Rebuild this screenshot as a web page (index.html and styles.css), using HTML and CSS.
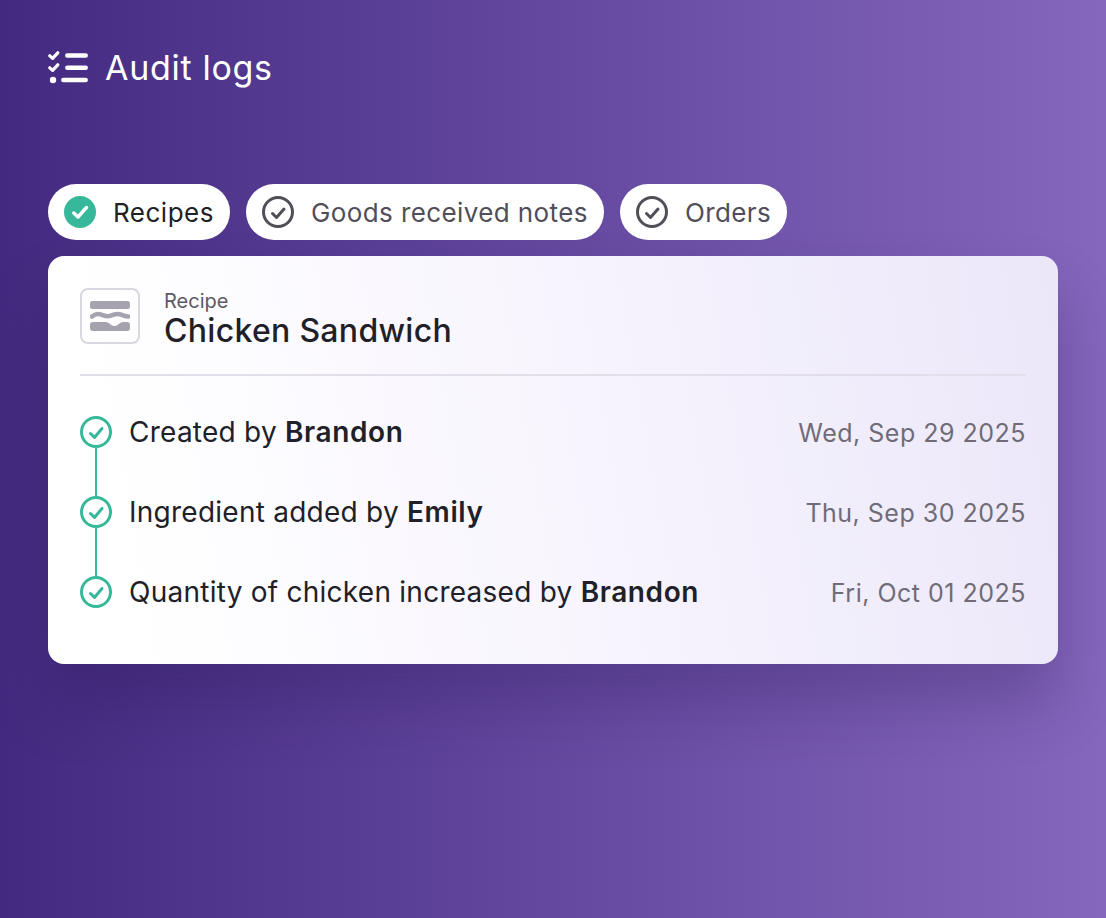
FILE: index.html
```html
<!DOCTYPE html>
<html lang="en">
<head>
    <meta charset="UTF-8">
    <meta name="viewport" content="width=device-width, initial-scale=1.0">
    <title>Audit logs</title>
    <link rel="stylesheet" href="styles.css">
</head>
<body>
    <header class="page-title">
        <svg class="title-icon" width="40" height="34" viewBox="0 0 40 34" fill="none">
            <path d="M1.8 4.8 L4.6 7.4 L9.8 1.8" stroke="#fff" stroke-width="3.2" stroke-linecap="round" stroke-linejoin="round"/>
            <path d="M1.8 16.8 L4.6 19.4 L9.8 13.8" stroke="#fff" stroke-width="3.2" stroke-linecap="round" stroke-linejoin="round"/>
            <circle cx="5" cy="29" r="3.2" fill="#fff"/>
            <path d="M19.3 4.5H37.7M19.3 16.8H37.7M15.3 29H37.7" stroke="#fff" stroke-width="4.5" stroke-linecap="round"/>
        </svg>
        <h1>Audit logs</h1>
    </header>

    <nav class="tabs">
        <div class="tab active">
            <svg width="32" height="32" viewBox="0 0 32 32" fill="none">
                <circle cx="16" cy="16" r="16" fill="#38b89a"/>
                <path d="M9.800 17 L14 21 L22.500 11.500" stroke="#fff" stroke-width="3.400" stroke-linecap="round" stroke-linejoin="round"/>
            </svg>
            <span>Recipes</span>
        </div>
        <div class="tab">
            <svg width="32" height="32" viewBox="0 0 32 32" fill="none">
                <circle cx="16" cy="16" r="14.5" stroke="#514e58" stroke-width="3"/>
                <path d="M10.5 17.5 L14.5 21.5 L22 13" stroke="#514e58" stroke-width="3" stroke-linecap="round" stroke-linejoin="round"/>
            </svg>
            <span>Goods received notes</span>
        </div>
        <div class="tab">
            <svg width="32" height="32" viewBox="0 0 32 32" fill="none">
                <circle cx="16" cy="16" r="14.5" stroke="#514e58" stroke-width="3"/>
                <path d="M10.5 17.5 L14.5 21.5 L22 13" stroke="#514e58" stroke-width="3" stroke-linecap="round" stroke-linejoin="round"/>
            </svg>
            <span>Orders</span>
        </div>
    </nav>

    <main class="card">
        <div class="card-head">
            <div class="recipe-icon">
                <svg width="40" height="30" viewBox="0 0 40 30" fill="none">
                    <rect width="40" height="8" rx="2.5" fill="#a6a3ae"/>
                    <path d="M2 15.5C5 13 8 12.6 11 13.6C14 14.8 17 15.8 20 14.8C24 13.2 28 12.4 31 13.6C34 14.8 36 15.4 38 15.5" stroke="#a6a3ae" stroke-width="4.5" stroke-linecap="round"/>
                    <path d="M3 21H16C19 21 21 25 24.5 25C28 25 29.500 21 33 21H37A3 3 0 0 1 40 24V27A3 3 0 0 1 37 30H3A3 3 0 0 1 0 27V24A3 3 0 0 1 3 21Z" fill="#a6a3ae"/>
                </svg>
            </div>
            <div class="head-text">
                <div class="head-label">Recipe</div>
                <div class="head-name">Chicken Sandwich</div>
            </div>
        </div>

        <ul class="log">
            <li class="log-row">
                <svg class="log-check" width="32" height="32" viewBox="0 0 32 32" fill="none">
                    <circle cx="16" cy="16" r="14.5" stroke="#38b89a" stroke-width="3"/>
                    <path d="M10.5 17.5 L14.5 21.5 L22 12.5" stroke="#38b89a" stroke-width="3" stroke-linecap="round" stroke-linejoin="round"/>
                </svg>
                <span class="log-text">Created by <b>Brandon</b></span>
                <span class="log-date">Wed, Sep 29 2025</span>
            </li>
            <li class="log-row">
                <svg class="log-check" width="32" height="32" viewBox="0 0 32 32" fill="none">
                    <circle cx="16" cy="16" r="14.5" stroke="#38b89a" stroke-width="3"/>
                    <path d="M10.5 17.5 L14.5 21.5 L22 12.5" stroke="#38b89a" stroke-width="3" stroke-linecap="round" stroke-linejoin="round"/>
                </svg>
                <span class="log-text">Ingredient added by <b>Emily</b></span>
                <span class="log-date">Thu, Sep 30 2025</span>
            </li>
            <li class="log-row">
                <svg class="log-check" width="32" height="32" viewBox="0 0 32 32" fill="none">
                    <circle cx="16" cy="16" r="14.5" stroke="#38b89a" stroke-width="3"/>
                    <path d="M10.5 17.5 L14.5 21.5 L22 12.5" stroke="#38b89a" stroke-width="3" stroke-linecap="round" stroke-linejoin="round"/>
                </svg>
                <span class="log-text">Quantity of chicken increased by <b>Brandon</b></span>
                <span class="log-date">Fri, Oct 01 2025</span>
            </li>
        </ul>
    </main>
</body>
</html>
```

FILE: styles.css
```css
* {
    box-sizing: border-box;
}

html, body {
    height: 100%;
}

body {
    font-family: Inter, "Liberation Sans", sans-serif;
    background: linear-gradient(90deg, #432a80 0%, #5a3f97 35%, #8567bd 100%);
    color: #211f27;
    margin: 0;
    padding: 52px 48px 0;
    overflow: hidden;
}

.page-title {
    display: flex;
    align-items: center;
    gap: 17px;
    height: 32px;
    margin-bottom: 100px;
    color: #fff;
}

.title-icon {
    flex: none;
}

h1 {
    font-size: 34px;
    font-weight: 400;
    letter-spacing: 0.7px;
    margin: 0 0 1px;
}

.tabs {
    display: flex;
    gap: 16px;
    margin-bottom: 16px;
}

.tab {
    display: flex;
    align-items: center;
    gap: 17px;
    height: 56px;
    padding: 0 16px;
    background: #fff;
    border-radius: 28px;
    font-size: 26px;
    letter-spacing: 0.4px;
    color: #514e58;
}

.tab span {
    padding-top: 1px;
}

.tab.active {
    color: #211f27;
    letter-spacing: 0.5px;
}

.card {
    width: 1010px;
    height: 408px;
    padding: 32px;
    background: linear-gradient(80deg, #ffffff 8%, #f8f5fe 50%, #ebe7f9 100%);
    border-radius: 16px;
    box-shadow: 0 40px 60px rgba(40, 20, 80, 0.28);
}

.card-head {
    display: flex;
    align-items: center;
    gap: 24px;
    height: 88px;
    padding-bottom: 30px;
    border-bottom: 2px solid #e2dfea;
}

.recipe-icon {
    display: flex;
    align-items: center;
    justify-content: center;
    width: 60px;
    height: 56px;
    border: 2px solid #d9d7df;
    border-radius: 8px;
}

.head-text {
    margin-top: 6px;
}

.head-label {
    font-size: 20px;
    line-height: 24px;
    color: #5c5965;
}

.head-name {
    font-size: 32px;
    font-weight: 500;
    line-height: 36px;
    letter-spacing: 0.3px;
}

.log {
    list-style: none;
    margin: 0;
    padding: 0;
    margin-top: 40px;
}

.log-row {
    position: relative;
    display: flex;
    align-items: center;
    height: 32px;
    margin-bottom: 48px;
    font-size: 28px;
}

/* line joining one check to the next */
.log-row:not(:last-child)::after {
    content: "";
    position: absolute;
    left: 14.75px;
    top: 32px;
    width: 2.5px;
    height: 48px;
    background: #38b89a;
}

.log-check {
    flex: none;
    margin-right: 17px;
}

.log-text {
    flex: 1;
    letter-spacing: 0.25px;
}

.log-text b {
    font-weight: 600;
    letter-spacing: 0.6px;
}

.log-date {
    font-size: 25px;
    letter-spacing: 0.5px;
    color: #6f6c78;
    padding-top: 2px;
}
```
